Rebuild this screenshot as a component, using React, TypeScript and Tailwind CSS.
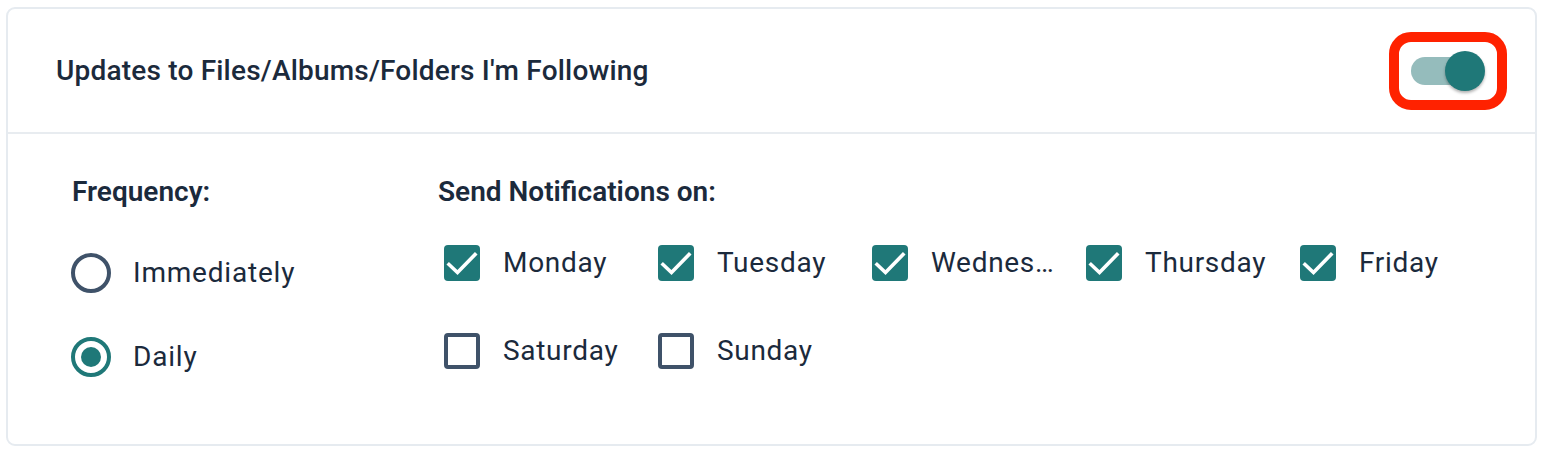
import { useState } from 'react';

const DAYS = ['Monday', 'Tuesday', 'Wednesday', 'Thursday', 'Friday', 'Saturday', 'Sunday'];

function Checkbox({ checked }: { checked: boolean }) {
  if (checked) {
    return (
      <span className="w-[36px] h-[36px] rounded-[4px] bg-[#1f7878] flex items-center justify-center shrink-0">
        <svg width="36" height="36" viewBox="0 0 36 36" fill="none">
          <path d="M5 19.5L13.5 27.5L31 9.5" stroke="white" strokeWidth="3.6" strokeLinecap="square" />
        </svg>
      </span>
    );
  }
  return <span className="w-[36px] h-[36px] rounded-[4px] border-[4px] border-[#3f5269] shrink-0" />;
}

function Radio({ checked }: { checked: boolean }) {
  return (
    <span
      className={`w-[40px] h-[40px] rounded-full border-[4px] flex items-center justify-center shrink-0 ${
        checked ? 'border-[#1f7878]' : 'border-[#3f5269]'
      }`}
    >
      {checked && <span className="w-[20px] h-[20px] rounded-full bg-[#1f7878]" />}
    </span>
  );
}

export default function App() {
  const [days, setDays] = useState<string[]>(DAYS.slice(0, 5));
  const [freq, setFreq] = useState<'immediately' | 'daily'>('daily');

  const toggleDay = (d: string) =>
    setDays((prev) => (prev.includes(d) ? prev.filter((x) => x !== d) : [...prev, d]));

  return (
    <div className="bg-white w-[1544px] h-[454px] pt-[7px] pl-[6px] font-['Roboto',sans-serif] text-[#1b2a3c]">
      <div className="w-[1531px] h-[439px] rounded-[9px] border-2 border-[#e6ebf0] flex flex-col">
        <div className="h-[125px] flex items-center justify-between pl-[48px] pr-[28px] border-b-2 border-[#e8ecf0]">
          <h2 className="text-[28px] font-medium tracking-[0.2px]">
            Updates to Files/Albums/Folders I'm Following
          </h2>
          <div className="w-[118px] h-[78px] rounded-[22px] border-[10px] border-[#ff2200] flex items-center justify-center">
            <div className="relative w-[74px] h-[40px]">
              <div className="absolute left-0 top-[6px] w-[66px] h-[28px] rounded-full bg-[#95bcbc]" />
              <div className="absolute right-0 top-0 w-[40px] h-[40px] rounded-full bg-[#1f7878] shadow-[0_2px_3px_rgba(0,0,0,0.3)]" />
            </div>
          </div>
        </div>

        <div className="flex pl-[64px] pt-[44px]">
          <div className="w-[366px] flex flex-col">
            <div className="text-[28px] font-semibold leading-[28px]">Frequency:</div>
            <div className="mt-[47px] flex flex-col gap-[44px]">
              {(['immediately', 'daily'] as const).map((f) => (
                <button key={f} onClick={() => setFreq(f)} className="flex items-center gap-[22px] h-[40px] -ml-px">
                  <Radio checked={freq === f} />
                  <span className="text-[28px] tracking-[0.8px]">
                    {f === 'immediately' ? 'Immediately' : 'Daily'}
                  </span>
                </button>
              ))}
            </div>
          </div>

          <div className="flex flex-col">
            <div className="text-[28px] font-semibold leading-[28px]">Send Notifications on:</div>
            <div className="mt-[37px] pl-[6px] grid grid-cols-[repeat(5,188px)] gap-x-[26px] gap-y-[48px]">
              {DAYS.map((d) => (
                <button key={d} onClick={() => toggleDay(d)} className="flex items-center gap-[23px] h-[40px]">
                  <Checkbox checked={days.includes(d)} />
                  <span className="w-[128px] truncate text-left text-[28px] tracking-[0.7px]">{d}</span>
                </button>
              ))}
            </div>
          </div>
        </div>
      </div>
    </div>
  );
}
